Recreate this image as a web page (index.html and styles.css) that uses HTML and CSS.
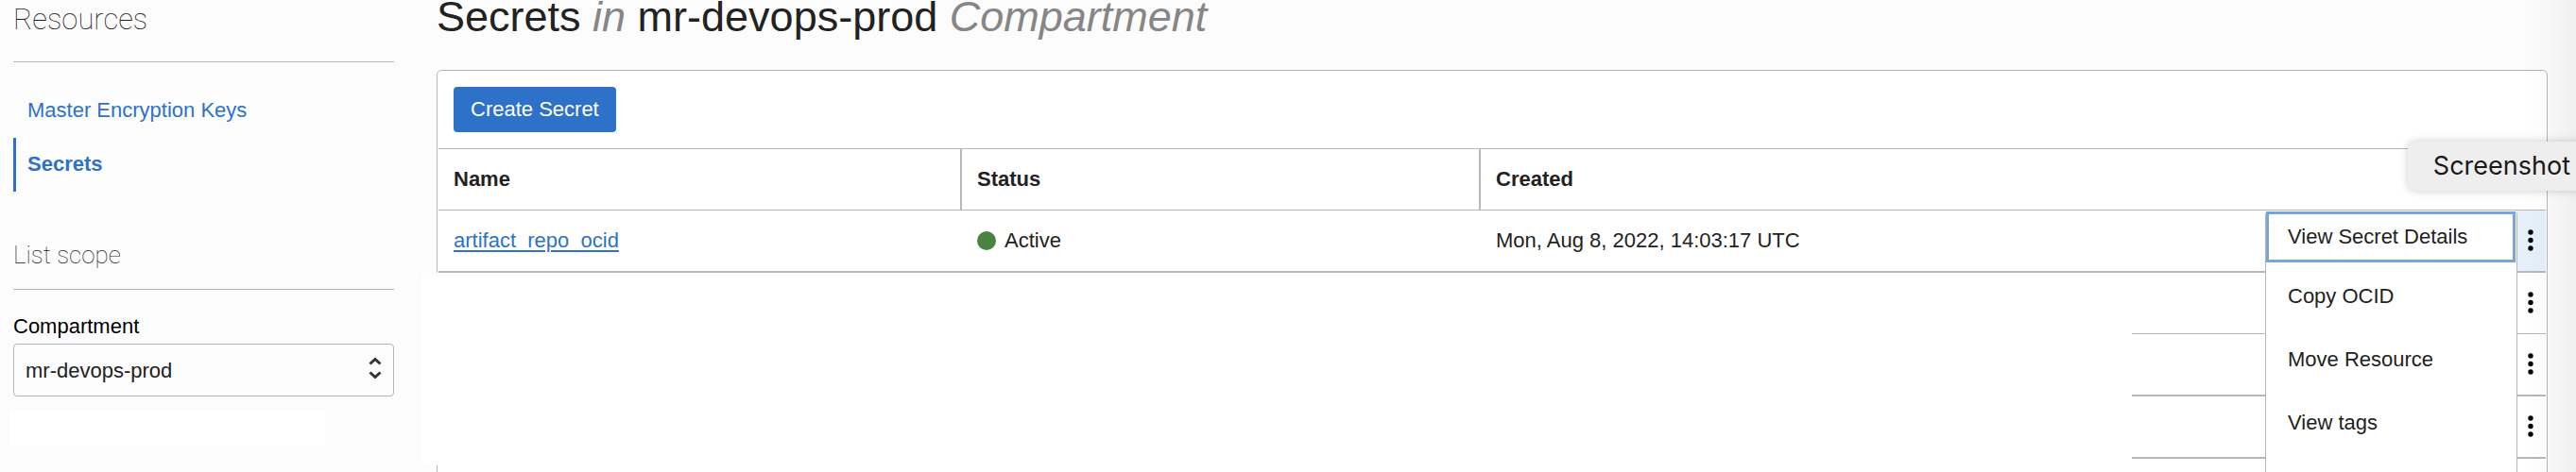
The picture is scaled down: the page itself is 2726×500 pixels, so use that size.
FILE: index.html
```html
<!DOCTYPE html>
<html lang="en">
<head>
<meta charset="utf-8">
<title>Secrets</title>
<link rel="stylesheet" href="styles.css">
</head>
<body>
<div class="page">
  <aside class="sidebar">
    <h2 class="side-title">Resources</h2>
    <nav class="side-nav">
      <a class="side-link" href="#keys">Master Encryption Keys</a>
      <a class="side-link active" href="#secrets" aria-current="page">Secrets</a>
    </nav>
    <h3 class="scope-title">List scope</h3>
    <label class="scope-label" for="compartment">Compartment</label>
    <div class="select-wrap">
      <select class="select" id="compartment"><option>mr-devops-prod</option></select>
      <svg class="select-icon" viewBox="0 0 14 24" aria-hidden="true"><path d="M1.500 7.500 7 2.500 12.500 7.500M1.500 16.500 7 21.500 12.500 16.500"/></svg>
    </div>
    <div class="side-blank"></div>
  </aside>
  <main class="main">
    <h1 class="title">Secrets <em>in</em> mr-devops-prod <em>Compartment</em></h1>
    <section class="panel">
      <div class="toolbar"><button class="create" type="button">Create Secret</button></div>
      <table class="table">
        <colgroup><col class="col-name"><col class="col-status"><col><col class="col-action"></colgroup>
        <thead>
          <tr><th>Name</th><th>Status</th><th>Created</th><th></th></tr>
        </thead>
        <tbody>
          <tr class="thick">
            <td><a class="link" href="#artifact">artifact_repo_ocid</a></td>
            <td><span class="status"><span class="dot"></span>Active</span></td>
            <td>Mon, Aug 8, 2022, 14:03:17 UTC</td>
            <td class="action open"><button class="kebab" type="button" aria-label="Actions"><svg viewBox="0 0 6 24"><circle cx="3" cy="3" r="2.700"/><circle cx="3" cy="11.500" r="2.700"/><circle cx="3" cy="20" r="2.700"/></svg></button></td>
          </tr>
          <tr>
            <td></td><td></td><td></td>
            <td class="action"><button class="kebab" type="button" aria-label="Actions"><svg viewBox="0 0 6 24"><circle cx="3" cy="3" r="2.700"/><circle cx="3" cy="11.500" r="2.700"/><circle cx="3" cy="20" r="2.700"/></svg></button></td>
          </tr>
          <tr class="thick">
            <td></td><td></td><td></td>
            <td class="action"><button class="kebab" type="button" aria-label="Actions"><svg viewBox="0 0 6 24"><circle cx="3" cy="3" r="2.700"/><circle cx="3" cy="11.500" r="2.700"/><circle cx="3" cy="20" r="2.700"/></svg></button></td>
          </tr>
          <tr class="thick">
            <td></td><td></td><td></td>
            <td class="action"><button class="kebab" type="button" aria-label="Actions"><svg viewBox="0 0 6 24"><circle cx="3" cy="3" r="2.700"/><circle cx="3" cy="11.500" r="2.700"/><circle cx="3" cy="20" r="2.700"/></svg></button></td>
          </tr>
          <tr><td></td><td></td><td></td><td class="action"></td></tr>
        </tbody>
      </table>
      <div class="cover"></div>
      <div class="menu" role="menu">
        <button class="menu-item focused" type="button" role="menuitem">View Secret Details</button>
        <button class="menu-item" type="button" role="menuitem">Copy OCID</button>
        <button class="menu-item" type="button" role="menuitem">Move Resource</button>
        <button class="menu-item" type="button" role="menuitem">View tags</button>
      </div>
    </section>
  </main>
  <div class="edge-shade"></div>
  <div class="tooltip" role="tooltip">Screenshot</div>
</div>
</body>
</html>
```
FILE: styles.css
```css
* { box-sizing: border-box; }
body {
  margin: 0;
  background: #fcfcfc;
  color: #222;
  font: 22px/28px "Liberation Sans", Arial, sans-serif;
}
button, select { font: inherit; color: inherit; }
.page {
  position: relative;
  display: flex;
  gap: 45px;
  height: 100vh;
  padding: 0 30px 0 14px;
  overflow: hidden;
}
.sidebar { flex: 0 0 403px; }
.side-title, .scope-title {
  margin: 0;
  border-bottom: 1px solid #b4b8be;
  font-family: Roboto, "Liberation Sans", sans-serif;
  font-weight: 100;
}
.side-title { height: 66px; font-size: 31px; line-height: 42px; }
.side-nav { display: flex; flex-direction: column; padding-top: 23px; }
.side-link {
  padding: 14px 12px 15px;
  border-left: 3px solid transparent;
  color: #2d72c8;
  text-decoration: none;
}
.side-link.active { border-color: #2d72c8; font-weight: bold; }
.scope-title { height: 104px; padding-top: 47px; font-size: 26px; line-height: 40px; }
.scope-label { display: block; padding: 25px 0 4px; color: #000; }
.select-wrap { position: relative; }
.select {
  display: block;
  width: 100%;
  height: 56px;
  padding: 2px 12px 0;
  border: 1px solid #b0b6c0;
  border-radius: 4px;
  background: #fcfcfc;
  appearance: none;
}
.select-icon {
  position: absolute;
  top: 14px;
  right: 13px;
  width: 14px;
  height: 24px;
  fill: none;
  stroke: #333;
  stroke-width: 3;
  pointer-events: none;
}
.side-blank { width: 334px; height: 39px; margin: 14px 0 0 -4px; background: #fff; }
.main { flex: 1; min-width: 0; }
.title {
  margin: 0;
  height: 74px;
  font-size: 45px;
  font-weight: normal;
  line-height: 36px;
  white-space: nowrap;
}
.title em { color: #868686; }
.panel {
  position: relative;
  height: 500px;
  padding: 0 1px;
  border: 1px solid #b4b8be;
  border-radius: 5px;
  background: #fff;
}
.toolbar { padding: 17px 16px; border-bottom: 1px solid #b4b8be; }
.create {
  display: block;
  height: 48px;
  padding: 0 18px;
  border: 0;
  border-radius: 4px;
  background: #2d72c8;
  color: #fff;
}
.table { width: 100%; border-spacing: 0; table-layout: fixed; text-align: left; }
.col-name { width: 554px; }
.col-status { width: 549px; }
.col-action { width: 32px; }
.table th, .table td { height: 65px; padding: 0 16px; border-bottom: 1px solid #b4b8be; }
.table th:nth-child(-n+2) { border-right: 2px solid #b4b8be; }
.table .thick td { height: 66px; border-bottom-width: 2px; }
.table .action { padding: 0; }
.table .open { background: #e5f0fa; }
.link { color: #2d72c8; text-decoration-thickness: 2px; text-underline-offset: 3px; }
.status { display: flex; align-items: center; gap: 9px; }
.dot { width: 20px; height: 20px; border-radius: 50%; background: #4a8240; }
.kebab {
  display: flex;
  align-items: center;
  justify-content: center;
  width: 100%;
  padding: 0;
  border: 0;
  background: none;
}
.kebab svg { width: 6px; height: 24px; fill: #000; }
.cover {
  position: absolute;
  top: 214px;
  left: -16px;
  right: 439px;
  height: 204px;
  background: #fff;
}
.menu {
  position: absolute;
  top: 149px;
  right: 31px;
  width: 267px;
  height: 320px;
  border: 1px solid #b4b8be;
  border-top: 0;
  border-radius: 4px;
  background: #fff;
}
.menu-item {
  display: block;
  width: 100%;
  height: 67px;
  padding: 0 23px;
  border: 0;
  background: none;
  text-align: left;
}
.menu-item.focused {
  width: 264px;
  height: 54px;
  margin-bottom: 2px;
  padding: 0 20px;
  border: 3px solid #7ba3dc;
}
.edge-shade {
  position: absolute;
  inset: 0 0 0 auto;
  width: 60px;
  background: linear-gradient(to right, rgba(0, 0, 0, 0), rgba(0, 0, 0, 0.015) 50%, rgba(0, 0, 0, 0.05));
  pointer-events: none;
}
.tooltip {
  position: absolute;
  top: 150px;
  right: -10px;
  padding: 0 16px 0 27px;
  border-radius: 8px 0 0 8px;
  background: #eee;
  box-shadow: 0 0 8px rgba(0, 0, 0, 0.2);
  color: #1a1a1a;
  font: 27px/52px Inter, sans-serif;
}
```
